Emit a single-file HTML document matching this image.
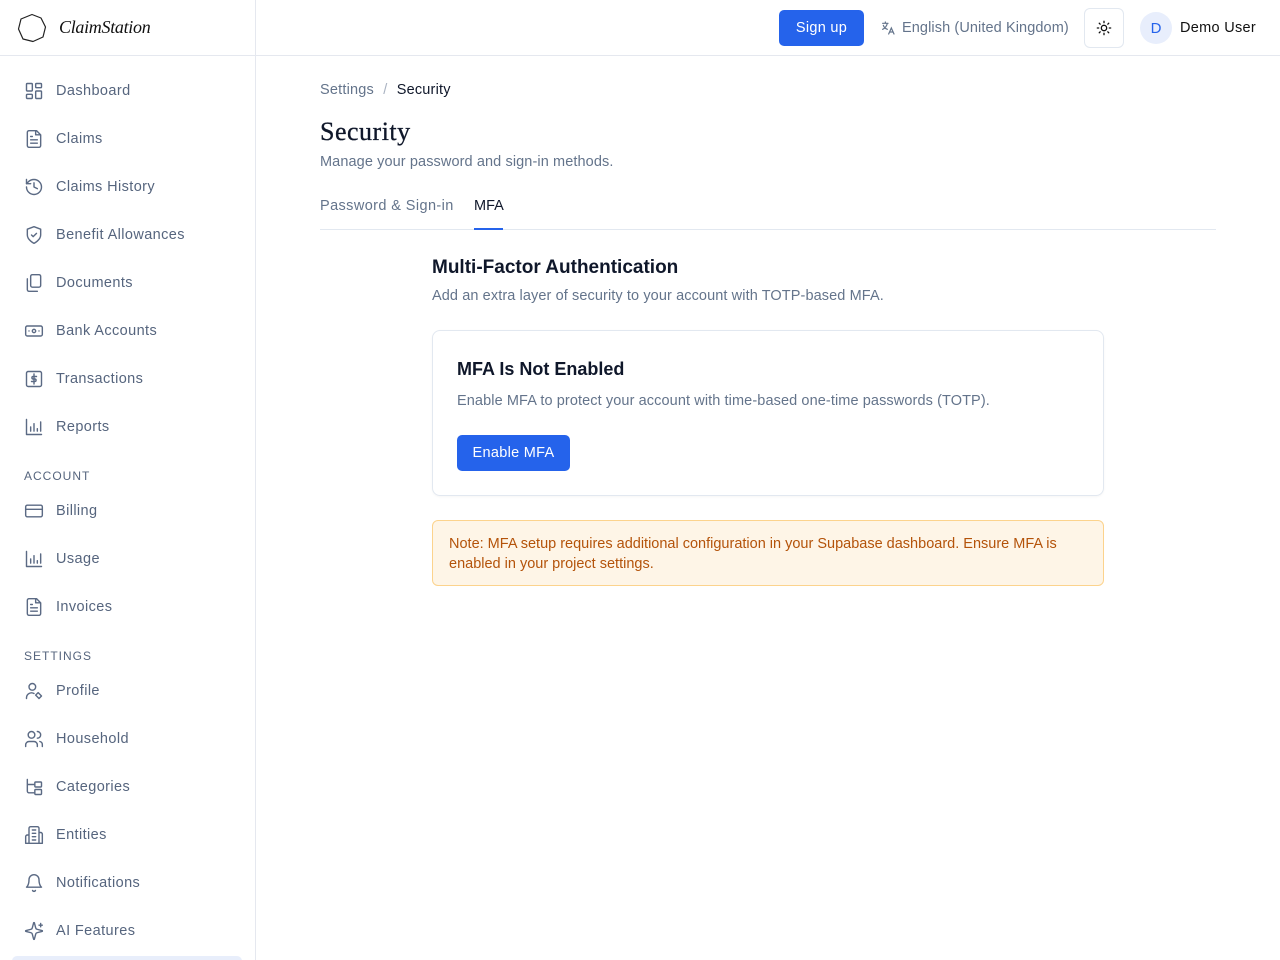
<!DOCTYPE html>
<html><head><meta charset="utf-8"><style>
*{box-sizing:border-box;margin:0;padding:0}
body{width:1280px;height:960px;overflow:hidden;background:#fff;font-family:"Liberation Sans",sans-serif;color:#0f172a;position:relative}
.side{position:absolute;left:0;top:0;width:256px;height:960px;border-right:1px solid #e5e8ef;overflow:hidden}
.logo{height:56px;border-bottom:1px solid #e5e8ef;display:flex;align-items:center;padding-left:17px}
.logo span{font-family:"Liberation Serif",serif;font-style:italic;font-size:18px;margin-left:12px;color:#111;letter-spacing:-0.3px}
.nav{position:absolute;left:24px;font-size:14.5px;color:#56657e;display:flex;align-items:center;letter-spacing:0.4px}
.nav svg{width:20px;height:20px;margin-right:12px;fill:none;stroke:#5b6a84;stroke-width:1.7;stroke-linecap:round;stroke-linejoin:round}
.sec{position:absolute;left:24px;font-size:12px;letter-spacing:1px;color:#56657e}
.top{position:absolute;left:256px;top:0;right:0;height:56px;border-bottom:1px solid #e5e8ef}
.btn{background:#2563eb;color:#fff;border-radius:5px;font-size:14.5px;display:flex;align-items:center;justify-content:center;position:absolute;letter-spacing:0.3px}
</style></head><body>
<div class="side">
 <div class="logo"><svg width="30" height="30" viewBox="0 0 30 30"><path d="M15 1.5 L24 5 L28.5 14 L26 24 L16 28.5 L6 26 L1.5 16 L4 6 Z" fill="none" stroke="#222" stroke-width="1.2" stroke-linejoin="round"/></svg><span>ClaimStation</span></div>
 <div class="nav" style="top:81px"><svg viewBox="0 0 24 24"><rect x="3" y="3" width="7" height="9" rx="1"/><rect x="14" y="3" width="7" height="5" rx="1"/><rect x="14" y="12" width="7" height="9" rx="1"/><rect x="3" y="16" width="7" height="5" rx="1"/></svg>Dashboard</div>
 <div class="nav" style="top:129px"><svg viewBox="0 0 24 24"><path d="M15 2H6a2 2 0 0 0-2 2v16a2 2 0 0 0 2 2h12a2 2 0 0 0 2-2V7z"/><path d="M14 2v5h5M8 13h8M8 17h8M8 9h2"/></svg>Claims</div>
 <div class="nav" style="top:177px"><svg viewBox="0 0 24 24"><path d="M3 12a9 9 0 1 0 9-9 9.75 9.75 0 0 0-6.74 2.74L3 8"/><path d="M3 3v5h5M12 7v5l4 2"/></svg>Claims History</div>
 <div class="nav" style="top:225px"><svg viewBox="0 0 24 24"><path d="M12 22s8-4 8-10V5l-8-3-8 3v7c0 6 8 10 8 10z"/><path d="m9 12 2 2 4-4"/></svg>Benefit Allowances</div>
 <div class="nav" style="top:273px"><svg viewBox="0 0 24 24"><rect x="8" y="2" width="12" height="15" rx="2"/><path d="M4 7v13a2 2 0 0 0 2 2h10"/></svg>Documents</div>
 <div class="nav" style="top:321px"><svg viewBox="0 0 24 24"><rect x="2" y="6" width="20" height="12" rx="2"/><circle cx="12" cy="12" r="2"/><path d="M6 12h.01M18 12h.01"/></svg>Bank Accounts</div>
 <div class="nav" style="top:369px"><svg viewBox="0 0 24 24"><rect x="3" y="3" width="18" height="18" rx="2"/><path d="M15 9h-4a1.5 1.5 0 0 0 0 3h2a1.5 1.5 0 0 1 0 3H9M12 6v12"/></svg>Transactions</div>
 <div class="nav" style="top:417px"><svg viewBox="0 0 24 24"><path d="M3 3v18h18M8 17v-5M12 17V8M16 17v-3M20 17V6"/></svg>Reports</div>
 <div class="sec" style="top:469px">ACCOUNT</div>
 <div class="nav" style="top:501px"><svg viewBox="0 0 24 24"><rect x="2" y="5" width="20" height="14" rx="2"/><path d="M2 10h20"/></svg>Billing</div>
 <div class="nav" style="top:549px"><svg viewBox="0 0 24 24"><path d="M3 3v18h18M8 17v-5M12 17V8M16 17v-3M20 17V6"/></svg>Usage</div>
 <div class="nav" style="top:597px"><svg viewBox="0 0 24 24"><path d="M15 2H6a2 2 0 0 0-2 2v16a2 2 0 0 0 2 2h12a2 2 0 0 0 2-2V7z"/><path d="M14 2v5h5M8 13h8M8 17h8M8 9h2"/></svg>Invoices</div>
 <div class="sec" style="top:649px">SETTINGS</div>
 <div class="nav" style="top:681px"><svg viewBox="0 0 24 24"><circle cx="10" cy="7" r="4"/><path d="M3 21v-1a6 6 0 0 1 9-5M17 14l4 4-3 3-4-4z"/></svg>Profile</div>
 <div class="nav" style="top:729px"><svg viewBox="0 0 24 24"><circle cx="9" cy="7" r="4"/><path d="M2 21v-2a4 4 0 0 1 4-4h6a4 4 0 0 1 4 4v2M16 3a4 4 0 0 1 0 8M22 21v-2a4 4 0 0 0-3-4"/></svg>Household</div>
 <div class="nav" style="top:777px"><svg viewBox="0 0 24 24"><path d="M4 3v14a2 2 0 0 0 2 2h6M4 9h8"/><rect x="13" y="6" width="8" height="6" rx="1"/><rect x="13" y="15" width="8" height="6" rx="1"/></svg>Categories</div>
 <div class="nav" style="top:825px"><svg viewBox="0 0 24 24"><path d="M6 22V4a2 2 0 0 1 2-2h8a2 2 0 0 1 2 2v18zM6 12H4a2 2 0 0 0-2 2v8h4M18 9h2a2 2 0 0 1 2 2v11h-4M10 6h4M10 10h4M10 14h4M10 18h4"/></svg>Entities</div>
 <div class="nav" style="top:873px"><svg viewBox="0 0 24 24"><path d="M6 8a6 6 0 0 1 12 0c0 7 3 9 3 9H3s3-2 3-9M10.3 21a1.9 1.9 0 0 0 3.4 0"/></svg>Notifications</div>
 <div class="nav" style="top:921px"><svg viewBox="0 0 24 24"><path d="M9.9 15.5A2 2 0 0 0 8.5 14.1l-6.1-1.6a.5.5 0 0 1 0-1l6.1-1.6a2 2 0 0 0 1.4-1.4l1.6-6.1a.5.5 0 0 1 1 0l1.6 6.1a2 2 0 0 0 1.4 1.4l6.1 1.6a.5.5 0 0 1 0 1l-6.1 1.6a2 2 0 0 0-1.4 1.4l-1.6 6.1a.5.5 0 0 1-1 0z"/><path d="M20 3v4M22 5h-4"/></svg>AI Features</div>
 <div style="position:absolute;left:12px;top:956px;width:230px;height:10px;background:#e8eefb;border-radius:6px"></div>
</div>
<div class="top">
 <div class="btn" style="left:523px;top:10px;width:85px;height:36px">Sign up</div>
 <div style="position:absolute;left:624px;top:20px;font-size:14.5px;color:#64748b;display:flex;align-items:center;letter-spacing:0.1px"><svg width="16" height="16" viewBox="0 0 24 24" fill="none" stroke="#64748b" stroke-width="1.8" stroke-linecap="round" style="margin-right:6px"><path d="M4 5h8M8 3v2M5 8c1 3 3 5 6 6M11 5c-1 4-3 7-7 9M13 21l4-9 4 9M14.5 18h5"/></svg>English (United Kingdom)</div>
 <div style="position:absolute;left:828px;top:8px;width:40px;height:40px;border:1px solid #e2e8f0;border-radius:6px;display:flex;align-items:center;justify-content:center"><svg width="16" height="16" viewBox="0 0 24 24" fill="none" stroke="#111" stroke-width="2" stroke-linecap="round"><circle cx="12" cy="12" r="4"/><path d="M12 2v2M12 20v2M4.9 4.9l1.4 1.4M17.7 17.7l1.4 1.4M2 12h2M20 12h2M4.9 19.1l1.4-1.4M17.7 6.3l1.4-1.4"/></svg></div>
 <div style="position:absolute;left:884px;top:12px;width:32px;height:32px;border-radius:50%;background:#e8eefc;color:#2563eb;font-size:15px;display:flex;align-items:center;justify-content:center">D</div>
 <div style="position:absolute;left:924px;top:20px;font-size:14.5px;color:#111;letter-spacing:0.3px">Demo User</div>
</div>
<div style="position:absolute;left:320px;top:82px;font-size:14.5px;color:#64748b;letter-spacing:0.2px">Settings <span style="color:#aab3c2;margin:0 5px">/</span> <span style="color:#0f172a">Security</span></div>
<div style="position:absolute;left:320px;top:117px;font-family:'Liberation Serif',serif;font-size:26px;color:#0f172a;-webkit-text-stroke:0.3px #0f172a;letter-spacing:0.5px">Security</div>
<div style="position:absolute;left:320px;top:154px;font-size:14.5px;color:#64748b;letter-spacing:0.1px">Manage your password and sign-in methods.</div>
<div style="position:absolute;left:320px;top:198px;font-size:14.5px;color:#64748b;letter-spacing:0.4px">Password &amp; Sign-in</div>
<div style="position:absolute;left:474px;top:198px;font-size:14.5px;color:#0f172a">MFA</div>
<div style="position:absolute;left:320px;top:229px;width:896px;height:1px;background:#e2e8f0"></div>
<div style="position:absolute;left:474px;top:228px;width:29px;height:2px;background:#2563eb"></div>
<div style="position:absolute;left:432px;top:257px;font-size:19px;font-weight:bold;color:#0f172a">Multi-Factor Authentication</div>
<div style="position:absolute;left:432px;top:288px;font-size:14.5px;color:#64748b;letter-spacing:0.1px">Add an extra layer of security to your account with TOTP-based MFA.</div>
<div style="position:absolute;left:432px;top:330px;width:672px;height:166px;border:1px solid #e2e8f0;border-radius:8px;box-shadow:0 1px 2px rgba(0,0,0,.04)">
 <div style="position:absolute;left:24px;top:28px;font-size:18px;font-weight:bold;color:#0f172a">MFA Is Not Enabled</div>
 <div style="position:absolute;left:24px;top:62px;font-size:14.5px;color:#64748b;letter-spacing:0.1px">Enable MFA to protect your account with time-based one-time passwords (TOTP).</div>
 <div class="btn" style="left:24px;top:104px;width:113px;height:36px">Enable MFA</div>
</div>
<div style="position:absolute;left:432px;top:520px;width:672px;height:66px;border:1px solid #fcd38d;background:#fef5e7;border-radius:6px;padding:13px 16px;font-size:14.5px;line-height:20px;color:#b4530a">Note: MFA setup requires additional configuration in your Supabase dashboard. Ensure MFA is enabled in your project settings.</div>
</body></html>
